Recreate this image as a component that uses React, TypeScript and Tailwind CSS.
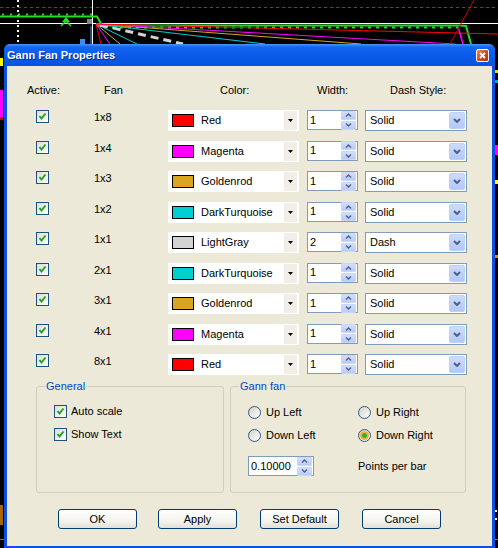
import React from 'react';

// ─── Data ─────────────────────────────────────

interface FanRow {
  fan:   string;
  color: string;
  hex:   string;
  width: number;
  dash:  string;
}

const FAN_ROWS: FanRow[] = [
  { fan: '1x8', color: 'Red',           hex: '#FF0000', width: 1, dash: 'Solid' },
  { fan: '1x4', color: 'Magenta',       hex: '#FF00FF', width: 1, dash: 'Solid' },
  { fan: '1x3', color: 'Goldenrod',     hex: '#DAA520', width: 1, dash: 'Solid' },
  { fan: '1x2', color: 'DarkTurquoise', hex: '#00CED1', width: 1, dash: 'Solid' },
  { fan: '1x1', color: 'LightGray',     hex: '#D3D3D3', width: 2, dash: 'Dash'  },
  { fan: '2x1', color: 'DarkTurquoise', hex: '#00CED1', width: 1, dash: 'Solid' },
  { fan: '3x1', color: 'Goldenrod',     hex: '#DAA520', width: 1, dash: 'Solid' },
  { fan: '4x1', color: 'Magenta',       hex: '#FF00FF', width: 1, dash: 'Solid' },
  { fan: '8x1', color: 'Red',           hex: '#FF0000', width: 1, dash: 'Solid' },
];

// ─── Chart behind the dialog ──────────────────

function Chart() {
  const ox = 96, oy = 24;
  return (
    <svg className="absolute inset-0" width="498" height="548" viewBox="0 0 498 548">
      <line x1="0" y1="7.5" x2="498" y2="7.5" stroke="#0A7A0A" strokeDasharray="3 3" />
      <line x1="18" y1="0" x2="18" y2="44" stroke="#fff" strokeWidth="2" strokeDasharray="2 3" />
      <line x1="92.5" y1="0" x2="92.5" y2="44" stroke="#fff" />
      <line x1="0" y1="23.5" x2="498" y2="23.5" stroke="#fff" />
      {/* green trend line */}
      <polyline points="0,16.5 97,16.5 102,25.5 460,25.5 466,26 471,44" fill="none" stroke="#22DD22" strokeWidth="2" />
      <line x1="2" y1="14.5" x2="96" y2="14.5" stroke="#22DD22" strokeWidth="2" strokeDasharray="2 6" />
      <line x1="104" y1="27.5" x2="458" y2="27.5" stroke="#22DD22" strokeWidth="2" strokeDasharray="3 5" />
      <polygon points="66,17 62,22 70,22" fill="#22DD22" />
      <polyline points="61,26 66,21 71,26" fill="none" stroke="#22DD22" strokeWidth="1.5" />
      <rect x="87" y="19" width="5" height="5" fill="#888" />
      <line x1="91" y1="26" x2="91" y2="44" stroke="#3A8CFF" />
      <rect x="80" y="39" width="5" height="5" fill="#3A8CFF" />
      {/* fan lines */}
      <line x1={ox} y1={oy} x2="101" y2="44" stroke="#FF0000" />
      <line x1={ox} y1={oy} x2="110" y2="44" stroke="#FF00FF" />
      <line x1={ox} y1={oy} x2="120" y2="44" stroke="#DAA520" />
      <line x1={ox} y1={oy} x2="137" y2="44" stroke="#00CED1" />
      <line x1="100" y1="25" x2="183" y2="44" stroke="#D3D3D3" strokeWidth="3" strokeDasharray="8 5" />
      <line x1={ox} y1={oy} x2="265" y2="44" stroke="#00CED1" />
      <line x1={ox} y1={oy} x2="361" y2="44" stroke="#DAA520" />
      <line x1={ox} y1={oy} x2="455" y2="44" stroke="#FF00FF" />
      <line x1={ox} y1={oy} x2="498" y2="34" stroke="#FF0000" />
      <line x1="458" y1="27" x2="463" y2="44" stroke="#FF00FF" strokeWidth="1.5" />
      <line x1="450" y1="44" x2="474" y2="0" stroke="#CC0000" />
      {/* edges peeking out at the sides */}
      <rect x="0" y="58" width="3" height="8" fill="#FFFF00" />
      <rect x="0" y="90" width="3" height="27" fill="#FF00FF" />
      <rect x="0" y="117" width="3" height="3" fill="#CC0000" />
      <rect x="0" y="505" width="3" height="20" fill="#AA6600" />
      <line x1="0" y1="539.5" x2="4" y2="539.5" stroke="#22AA22" />
      <rect x="495" y="70" width="3" height="3" fill="#DDDD00" />
      <rect x="495" y="80" width="3" height="3" fill="#00AAAA" />
      <rect x="495" y="145" width="3" height="10" fill="#FF00FF" />
      <rect x="495" y="180" width="3" height="4" fill="#FFFF00" />
      <rect x="495" y="255" width="3" height="3" fill="#DD8800" />
      <rect x="495" y="510" width="2" height="2" fill="#fff" />
      <rect x="495" y="518" width="2" height="2" fill="#fff" />
      <line x1="494" y1="539.5" x2="498" y2="539.5" stroke="#22AA22" />
    </svg>
  );
}

// ─── XP controls ──────────────────────────────

function CheckBox() {
  return (
    <span className="flex h-[13px] w-[13px] shrink-0 items-center justify-center border border-[#1C5180] bg-[linear-gradient(135deg,#DCDCD7,#FFFFFF)]">
      <svg width="9" height="9" viewBox="0 0 9 9">
        <path d="M1.5 4 L3.5 6.5 L7.5 1.5" stroke="#21A121" strokeWidth="2" fill="none" />
      </svg>
    </span>
  );
}

function Radio({ checked }: { checked?: boolean }) {
  return (
    <span className="flex h-[13px] w-[13px] shrink-0 items-center justify-center rounded-full border border-[#2F5A8B] bg-[linear-gradient(135deg,#D4D1C6,#FFFFFF)]">
      {checked && (
        <span className="flex h-[9px] w-[9px] items-center justify-center rounded-full bg-[#F5B13C]">
          <span className="h-[5px] w-[5px] rounded-full bg-[#2FB52C]" />
        </span>
      )}
    </span>
  );
}

function SpinButtons() {
  return (
    <div className="flex w-[15px] flex-col gap-px">
      {['up', 'down'].map(d => (
        <span
          key={d}
          className="flex h-[9px] items-center justify-center rounded-[1px] border border-[#C8D6F8] bg-[linear-gradient(to_bottom,#D2DEFC,#B8CBF8)]"
        >
          <svg width="7" height="4" viewBox="0 0 7 4">
            <polyline
              points={d === 'up' ? '1,3.5 3.5,1 6,3.5' : '1,0.5 3.5,3 6,0.5'}
              fill="none"
              stroke="#4D6185"
              strokeWidth="1.4"
            />
          </svg>
        </span>
      ))}
    </div>
  );
}

function Spinner({ value, w }: { value: string; w: string }) {
  return (
    <div className={`flex h-[20px] ${w} items-center justify-between border border-[#7F9DB9] bg-white pl-[2px] pr-px`}>
      <span>{value}</span>
      <SpinButtons />
    </div>
  );
}

function ColorCombo({ name, hex }: { name: string; hex: string }) {
  return (
    <div className="flex h-[21px] w-[131px] items-center bg-white pl-[4px] pr-[2px]">
      <span className="h-[13px] w-[22px] border border-black" style={{ backgroundColor: hex }} />
      <span className="ml-[7px] flex-1">{name}</span>
      <span className="flex h-[19px] w-[13px] items-center justify-center bg-[#F0EEE6]">
        <svg width="5" height="3" viewBox="0 0 5 3">
          <polygon points="0,0 5,0 2.5,3" fill="#000" />
        </svg>
      </span>
    </div>
  );
}

function DashCombo({ value }: { value: string }) {
  return (
    <div className="flex h-[21px] w-[102px] items-center border border-[#7F9DB9] bg-white pl-[4px] pr-px">
      <span className="flex-1">{value}</span>
      <span className="flex h-[17px] w-[16px] items-center justify-center rounded-[2px] border border-[#BCD0F8] bg-[linear-gradient(to_bottom,#CEDBFC,#B2C8F8)]">
        <svg width="8" height="5" viewBox="0 0 8 5">
          <polyline points="1,1 4,4 7,1" fill="none" stroke="#4D6185" strokeWidth="2" />
        </svg>
      </span>
    </div>
  );
}

function XPButton({ label, className }: { label: string; className?: string }) {
  return (
    <button className={`h-[20px] w-[79px] rounded-[3px] border border-[#003C74] bg-[linear-gradient(to_bottom,#FFFFFF_0%,#F4F3EE_60%,#E3E0D6_100%)] text-black ${className ?? ''}`}>
      {label}
    </button>
  );
}

function GroupBox({ title, className, children }: { title: string; className: string; children: React.ReactNode }) {
  return (
    <div className={`relative h-[107px] rounded-[3px] border border-[#D0D0BF] ${className}`}>
      <span className="absolute -top-[7px] left-[8px] bg-[#ECE9D8] px-px text-[#0046D5]">{title}</span>
      {children}
    </div>
  );
}

// ─── App ──────────────────────────────────────

export default function App() {
  return (
    <div className="relative h-[548px] w-[498px] overflow-hidden bg-black font-['Liberation_Sans',Arial,sans-serif] text-[11px] leading-[13px] text-black">
      <Chart />

      <div className="absolute left-[4px] top-[44px] flex h-[504px] w-[491px] flex-col rounded-t-[6px] bg-[#0B50E0]">
        {/* Title bar */}
        <div className="flex h-[22px] shrink-0 items-center justify-between rounded-t-[6px] bg-[linear-gradient(to_bottom,#4A95FA_0%,#1465F0_14%,#0A5AEA_55%,#0753DE_100%)] pl-[3px] pr-[6px]">
          <span className="text-[11px] font-bold text-white [text-shadow:1px_1px_0_#0B2A8C]">Gann Fan Properties</span>
          <span className="flex h-[13px] w-[13px] items-center justify-center rounded-[2px] border border-white bg-[linear-gradient(135deg,#F08A6A,#D4451C_55%,#B8320E)]">
            <svg width="7" height="7" viewBox="0 0 7 7">
              <path d="M1 1 L6 6 M6 1 L1 6" stroke="#fff" strokeWidth="1.8" />
            </svg>
          </span>
        </div>

        {/* Client area */}
        <div className="mx-[3px] mb-[2px] flex flex-1 flex-col bg-[#ECE9D8] pt-[18px]">
          {/* Header */}
          <div className="flex h-[13px] items-center pl-[20px]">
            <span className="w-[77px]">Active:</span>
            <span className="w-[116px]">Fan</span>
            <span className="w-[97px]">Color:</span>
            <span className="w-[73px]">Width:</span>
            <span>Dash Style:</span>
          </div>

          {/* Fan rows */}
          <div className="mt-[13px] flex flex-col">
            {FAN_ROWS.map((r, i) => (
              <div key={i} className="flex h-[30.5px] items-start pl-[29px]">
                <CheckBox />
                <span className="ml-[45px] mt-px w-[74px]">{r.fan}</span>
                <ColorCombo name={r.color} hex={r.hex} />
                <div className="ml-[8px]">
                  <Spinner value={String(r.width)} w="w-[51px]" />
                </div>
                <div className="ml-[7px]">
                  <DashCombo value={r.dash} />
                </div>
              </div>
            ))}
          </div>

          {/* Groups */}
          <div className="mt-[1.5px] flex gap-[6px] pl-[29px]">
            <GroupBox title="General" className="w-[188px]">
              <div className="flex flex-col gap-[10px] pl-[17px] pt-[18px]">
                <label className="flex items-center gap-[4px]"><CheckBox />Auto scale</label>
                <label className="flex items-center gap-[4px]"><CheckBox />Show Text</label>
              </div>
            </GroupBox>

            <GroupBox title="Gann fan" className="w-[236px]">
              <div className="grid grid-cols-[110px_1fr] gap-y-[10px] pl-[17px] pt-[19px]">
                <label className="flex items-center gap-[5px]"><Radio />Up Left</label>
                <label className="flex items-center gap-[5px]"><Radio />Up Right</label>
                <label className="flex items-center gap-[5px]"><Radio />Down Left</label>
                <label className="flex items-center gap-[5px]"><Radio checked />Down Right</label>
              </div>
              <div className="mt-[14px] grid grid-cols-[110px_1fr] items-center pl-[17px]">
                <Spinner value="0.10000" w="w-[66px]" />
                <span>Points per bar</span>
              </div>
            </GroupBox>
          </div>

          {/* Buttons */}
          <div className="mt-[16px] flex pl-[51px]">
            <XPButton label="OK" />
            <XPButton label="Apply" className="ml-[21px]" />
            <XPButton label="Set Default" className="ml-[23px]" />
            <XPButton label="Cancel" className="ml-[23px]" />
          </div>
        </div>
      </div>
    </div>
  );
}
